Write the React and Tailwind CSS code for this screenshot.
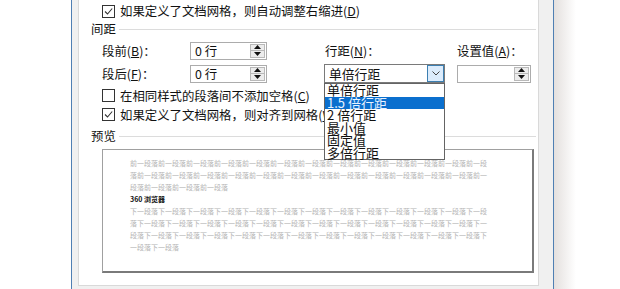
import React from "react";

const FONT = "font-['Noto_Sans_CJK_SC','Noto_Sans',sans-serif]";

function Check({ checked }) {
  return (
    <div className="w-[13px] h-[13px] border border-[#333333] bg-white flex items-center justify-center shrink-0">
      {checked && (
        <svg width="11" height="11" viewBox="0 0 11 11">
          <path d="M2 5.5L4.5 8L9.2 2.5" stroke="#333" strokeWidth="1.1" fill="none" />
        </svg>
      )}
    </div>
  );
}

function Spinner() {
  return (
    <div className="my-[1px] mr-[1px] w-[15px] flex flex-col border border-[#b9b9b9] bg-[#ececec]">
      <div className="flex-1 flex items-center justify-center border-b border-[#b9b9b9]">
        <svg width="7" height="4" viewBox="0 0 7 4">
          <path d="M0 4L3.5 0L7 4Z" fill="#111" />
        </svg>
      </div>
      <div className="flex-1 flex items-center justify-center">
        <svg width="7" height="4" viewBox="0 0 7 4">
          <path d="M0 0L3.5 4L7 0Z" fill="#111" />
        </svg>
      </div>
    </div>
  );
}

function SpinBox({ text, w }) {
  return (
    <div className={`${w} h-[18px] border border-[#acacac] bg-white flex`}>
      <div className="flex-1 pl-[4px] text-[12.4px] leading-[16px] text-[#111]">{text}</div>
      <Spinner />
    </div>
  );
}

function Header({ label }) {
  return (
    <div className="h-[14px] flex items-center pl-[12px] pr-[2px]">
      <span className="text-[12.4px] leading-[14px] text-[#111]">{label}</span>
      <div className="flex-1 h-px bg-[#dcdcdc] ml-[3px]" />
    </div>
  );
}

function Key({ k }) {
  return (
    <span>
      (<span className="underline">{k}</span>)
    </span>
  );
}

const items = ["单倍行距", "1.5 倍行距", "2 倍行距", "最小值", "固定值", "多倍行距"];

export default function App() {
  return (
    <div className={`w-[620px] h-[289px] bg-white overflow-hidden flex ${FONT}`}>
      <div className="w-[71px] shrink-0" />
      {/* window */}
      <div className="w-[483px] h-full shrink-0 border-l border-r border-[#4f7fb3] bg-[#f0f0f0] flex pl-[6px] pr-[14px]">
        {/* panel */}
        <div className="relative w-[461px] h-[286px] bg-white border-l border-r border-b border-[#d9d9d9] flex flex-col">
          {/* row 1 */}
          <div className="h-[22px] flex items-center pl-[23px] gap-[5px]">
            <Check checked />
            <span className="text-[12.4px] leading-[14px] text-[#111]">
              如果定义了文档网格，则自动调整右缩进<Key k="D" />
            </span>
          </div>
          <Header label="间距" />
          {/* spacing rows */}
          <div className="mt-[5px] flex flex-col gap-[4px] pl-[23px]">
            <div className="h-[19px] flex items-center">
              <div className="w-[88px] text-[12.4px] leading-[14px] text-[#111]">
                段前<Key k="B" />：
              </div>
              <SpinBox text="0 行" w="w-[77px]" />
              <div className="w-[57px]" />
              <div className="w-[121px] pl-[1px] text-[12.4px] leading-[14px] text-[#111]">
                行距<Key k="N" />：
              </div>
              <div className="w-[12px]" />
              <div className="text-[12.4px] leading-[14px] text-[#111]">
                设置值<Key k="A" />：
              </div>
            </div>
            <div className="h-[19px] flex items-center">
              <div className="w-[88px] text-[12.4px] leading-[14px] text-[#111]">
                段后<Key k="F" />：
              </div>
              <SpinBox text="0 行" w="w-[77px]" />
              <div className="w-[57px]" />
              <div className="relative w-[121px] h-[19px] border border-[#7a7a7a] bg-white flex">
                <div className="flex-1 pl-[4px] text-[12.8px] leading-[17px] text-[#111]">单倍行距</div>
                <div className="w-[17px] border border-[#3c7fb1] bg-[#dcecfc] flex items-center justify-center">
                  <svg width="8" height="5" viewBox="0 0 8 5">
                    <path d="M0.5 0.5L4 4L7.5 0.5" stroke="#444" strokeWidth="1" fill="none" />
                  </svg>
                </div>
                {/* dropdown list */}
                <div className="absolute left-[-1px] top-[18px] w-[121px] h-[77px] border border-[#646464] bg-white flex flex-col z-10">
                  {items.map((t, i) => (
                    <div
                      key={t}
                      className={`h-[12.5px] pl-[2px] text-[13px] leading-[12.5px] whitespace-nowrap ${
                        i === 1 ? "bg-[#0a6fce] text-[#e8f2ff]" : "text-[#111]"
                      }`}
                    >
                      {t}
                    </div>
                  ))}
                </div>
              </div>
              <div className="w-[12px]" />
              <SpinBox text="" w="w-[74px]" />
            </div>
          </div>
          {/* checkboxes */}
          <div className="mt-[3px] h-[19px] flex items-center pl-[23px] gap-[5px]">
            <Check />
            <span className="text-[12.4px] leading-[14px] text-[#111]">
              在相同样式的段落间不添加空格<Key k="C" />
            </span>
          </div>
          <div className="h-[19px] flex items-center pl-[23px] gap-[5px]">
            <Check checked />
            <span className="text-[12.4px] leading-[14px] text-[#111] whitespace-nowrap">
              如果定义了文档网格，则对齐到网格<Key k="W" />
            </span>
          </div>
          <div className="mt-[5px]">
            <Header label="预览" />
          </div>
          {/* preview */}
          <div className="mt-[6px] ml-[23px] w-[432px] h-[124px] border-t border-l border-[#a0a0a0] border-r-2 border-b-2 border-r-[#7a7a7a] border-b-[#7a7a7a] bg-white pl-[27px] pt-[7px]">
            <div className="w-[357.5px] text-[7px] leading-[12px] text-[#b4b4b4] break-all">
              {"前一段落".repeat(29)}
            </div>
            <div className="text-[7px] leading-[12px] font-bold text-[#111]">360 浏览器</div>
            <div className="w-[357.5px] text-[7px] leading-[12px] text-[#b4b4b4] break-all">
              {"下一段落".repeat(40)}
            </div>
          </div>
        </div>
      </div>
      <div className="w-[22px] h-full bg-gradient-to-r from-[#e4e0de] to-white" />
    </div>
  );
}
